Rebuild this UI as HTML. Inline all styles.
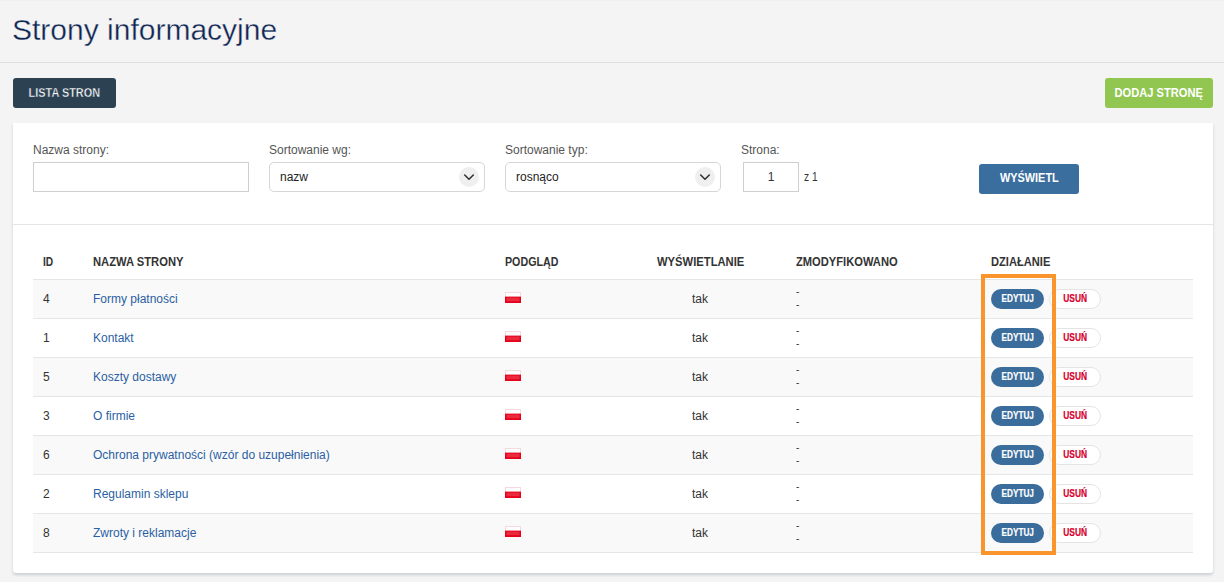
<!DOCTYPE html>
<html><head><meta charset="utf-8">
<style>
*{margin:0;padding:0;box-sizing:border-box}
html,body{-webkit-font-smoothing:antialiased;width:1224px;height:582px;overflow:hidden;background:#f4f4f4;font-family:"Liberation Sans",sans-serif;position:relative}
.a{position:absolute;white-space:nowrap}
.title{left:12px;top:12px;font-size:30px;line-height:36px;color:#0e2552;-webkit-text-stroke:0.35px #f4f4f4}
.hr{left:0;top:62px;width:1224px;height:1px;background:#dbdfe2}
.btn{border-radius:3px;color:#fff;font-size:12px;font-weight:bold;text-align:center;line-height:30px}
.card{left:13px;top:123px;width:1200px;height:450px;background:#fff;border-radius:0 0 3px 3px;box-shadow:0 2px 3px rgba(40,60,90,.2)}
.lbl{font-size:12px;color:#555;line-height:14px}
.inp{height:30px;border:1px solid #cfcfcf;background:#fff}
.sel{height:30px;border:1px solid #d6d6d6;border-radius:5px;background:#fff;font-size:12px;color:#222;line-height:28px;padding-left:10px}
.circ{position:absolute;left:189px;top:4px;width:20px;height:20px;border-radius:50%;background:#efefef}
.th{font-size:12px;font-weight:bold;color:#333;line-height:14px}
.row{left:33px;width:1160px;height:39px;border-top:1px solid #e3e7ea}
.row.s{background:#f9f9f9}
.td{font-size:12px;color:#333;line-height:14px}
.lnk{font-size:12px;color:#2b5fa3;line-height:14px}
.flag{width:16px;height:11px}
.dash{font-size:10px;color:#333;line-height:13.4px}
.ed{width:53px;height:20px;border-radius:10px;background:#3a6d9c;color:#fff;font-size:10px;font-weight:bold;text-align:center;line-height:20px;-webkit-text-stroke:0.2px #fff}
.us{width:52px;height:20px;border-radius:10px;background:#fff;border:1px solid #e4e4e4;color:#d7002d;font-size:10px;font-weight:bold;text-align:center;line-height:18px;-webkit-text-stroke:0.2px #d7002d}
.sx{display:inline-block;transform-origin:50% 50%}
.sl{display:inline-block;transform-origin:0 50%}
</style></head><body>
<div class="a title">Strony informacyjne</div>
<div class="a hr"></div>
<div class="a" style="left:0;top:0;width:1224px;height:1px;background:#edeff1"></div>
<div class="a btn" style="left:13px;top:78px;width:103px;height:30px;background:#2c4253"><span class="sx" style="transform:scaleX(.91);-webkit-text-stroke:0.4px #2c4253">LISTA STRON</span></div>
<div class="a btn" style="left:1105px;top:78px;width:108px;height:30px;background:#91c651"><span class="sx" style="transform:scaleX(.926)">DODAJ STRONĘ</span></div>
<div class="a card"></div>

<div class="a lbl" style="left:33px;top:143px">Nazwa strony:</div>
<div class="a inp" style="left:33px;top:162px;width:216px"></div>
<div class="a lbl" style="left:269px;top:143px">Sortowanie wg:</div>
<div class="a sel" style="left:269px;top:162px;width:216px">nazw<div class="circ"><svg width="20" height="20" viewBox="0 0 20 20" style="display:block"><path d="M5.7 8 L10 12.2 L14.3 8" fill="none" stroke="#333" stroke-width="1.6" stroke-linecap="round" stroke-linejoin="round"/></svg></div></div>
<div class="a lbl" style="left:505px;top:143px">Sortowanie typ:</div>
<div class="a sel" style="left:505px;top:162px;width:216px">rosnąco<div class="circ"><svg width="20" height="20" viewBox="0 0 20 20" style="display:block"><path d="M5.7 8 L10 12.2 L14.3 8" fill="none" stroke="#333" stroke-width="1.6" stroke-linecap="round" stroke-linejoin="round"/></svg></div></div>
<div class="a lbl" style="left:741px;top:143px">Strona:</div>
<div class="a inp" style="left:743px;top:162px;width:56px;font-size:12px;color:#333;text-align:center;line-height:28px">1</div>
<div class="a td" style="left:804px;top:170px"><span class="sl" style="transform:scaleX(.85)">z 1</span></div>
<div class="a btn" style="left:979px;top:164px;width:100px;height:30px;line-height:28px;background:#3a6e9f"><span class="sx" style="transform:scaleX(.91)">WYŚWIETL</span></div>

<div class="a" style="left:13px;top:224px;width:1200px;height:1px;background:#e3e6e9"></div>

<div class="a th" style="left:43px;top:255px"><span class="sl" style="transform:scaleX(0.85)">ID</span></div>
<div class="a th" style="left:93px;top:255px"><span class="sl" style="transform:scaleX(0.934)">NAZWA STRONY</span></div>
<div class="a th" style="left:505px;top:255px"><span class="sl" style="transform:scaleX(0.89)">PODGLĄD</span></div>
<div class="a th" style="left:601px;width:200px;text-align:center;top:255px"><span class="sx" style="transform:scaleX(.935)">WYŚWIETLANIE</span></div>
<div class="a th" style="left:796px;top:255px"><span class="sl" style="transform:scaleX(0.93)">ZMODYFIKOWANO</span></div>
<div class="a th" style="left:991px;top:255px"><span class="sl" style="transform:scaleX(0.927)">DZIAŁANIE</span></div>

<div class="a row s" style="top:279px"></div>
<div class="a td" style="left:43px;top:292px">4</div>
<div class="a lnk" style="left:93px;top:292px">Formy płatności</div>
<div class="a flag" style="left:505px;top:292px"><svg width="16" height="11" viewBox="0 0 16 11" style="display:block"><rect x="0.5" y="0.5" width="15" height="5" fill="#fff" stroke="#f6d9dd" stroke-width="1"/><rect x="0" y="4.6" width="16" height="6.4" fill="#e6001c"/><rect x="1.5" y="5.6" width="13" height="3.6" fill="#ec2a3e"/></svg></div>
<div class="a td" style="left:692px;top:292px">tak</div>
<div class="a dash" style="left:796px;top:285px">-<br>-</div>
<div class="a ed" style="left:991px;top:289px"><span class="sx" style="transform:scaleX(.82)">EDYTUJ</span></div>
<div class="a us" style="left:1049px;top:289px"><span class="sx" style="transform:scaleX(.84)">USUŃ</span></div>
<div class="a row" style="top:318px"></div>
<div class="a td" style="left:43px;top:331px">1</div>
<div class="a lnk" style="left:93px;top:331px">Kontakt</div>
<div class="a flag" style="left:505px;top:331px"><svg width="16" height="11" viewBox="0 0 16 11" style="display:block"><rect x="0.5" y="0.5" width="15" height="5" fill="#fff" stroke="#f6d9dd" stroke-width="1"/><rect x="0" y="4.6" width="16" height="6.4" fill="#e6001c"/><rect x="1.5" y="5.6" width="13" height="3.6" fill="#ec2a3e"/></svg></div>
<div class="a td" style="left:692px;top:331px">tak</div>
<div class="a dash" style="left:796px;top:324px">-<br>-</div>
<div class="a ed" style="left:991px;top:328px"><span class="sx" style="transform:scaleX(.82)">EDYTUJ</span></div>
<div class="a us" style="left:1049px;top:328px"><span class="sx" style="transform:scaleX(.84)">USUŃ</span></div>
<div class="a row s" style="top:357px"></div>
<div class="a td" style="left:43px;top:370px">5</div>
<div class="a lnk" style="left:93px;top:370px">Koszty dostawy</div>
<div class="a flag" style="left:505px;top:370px"><svg width="16" height="11" viewBox="0 0 16 11" style="display:block"><rect x="0.5" y="0.5" width="15" height="5" fill="#fff" stroke="#f6d9dd" stroke-width="1"/><rect x="0" y="4.6" width="16" height="6.4" fill="#e6001c"/><rect x="1.5" y="5.6" width="13" height="3.6" fill="#ec2a3e"/></svg></div>
<div class="a td" style="left:692px;top:370px">tak</div>
<div class="a dash" style="left:796px;top:363px">-<br>-</div>
<div class="a ed" style="left:991px;top:367px"><span class="sx" style="transform:scaleX(.82)">EDYTUJ</span></div>
<div class="a us" style="left:1049px;top:367px"><span class="sx" style="transform:scaleX(.84)">USUŃ</span></div>
<div class="a row" style="top:396px"></div>
<div class="a td" style="left:43px;top:409px">3</div>
<div class="a lnk" style="left:93px;top:409px">O firmie</div>
<div class="a flag" style="left:505px;top:409px"><svg width="16" height="11" viewBox="0 0 16 11" style="display:block"><rect x="0.5" y="0.5" width="15" height="5" fill="#fff" stroke="#f6d9dd" stroke-width="1"/><rect x="0" y="4.6" width="16" height="6.4" fill="#e6001c"/><rect x="1.5" y="5.6" width="13" height="3.6" fill="#ec2a3e"/></svg></div>
<div class="a td" style="left:692px;top:409px">tak</div>
<div class="a dash" style="left:796px;top:402px">-<br>-</div>
<div class="a ed" style="left:991px;top:406px"><span class="sx" style="transform:scaleX(.82)">EDYTUJ</span></div>
<div class="a us" style="left:1049px;top:406px"><span class="sx" style="transform:scaleX(.84)">USUŃ</span></div>
<div class="a row s" style="top:435px"></div>
<div class="a td" style="left:43px;top:448px">6</div>
<div class="a lnk" style="left:93px;top:448px">Ochrona prywatności (wzór do uzupełnienia)</div>
<div class="a flag" style="left:505px;top:448px"><svg width="16" height="11" viewBox="0 0 16 11" style="display:block"><rect x="0.5" y="0.5" width="15" height="5" fill="#fff" stroke="#f6d9dd" stroke-width="1"/><rect x="0" y="4.6" width="16" height="6.4" fill="#e6001c"/><rect x="1.5" y="5.6" width="13" height="3.6" fill="#ec2a3e"/></svg></div>
<div class="a td" style="left:692px;top:448px">tak</div>
<div class="a dash" style="left:796px;top:441px">-<br>-</div>
<div class="a ed" style="left:991px;top:445px"><span class="sx" style="transform:scaleX(.82)">EDYTUJ</span></div>
<div class="a us" style="left:1049px;top:445px"><span class="sx" style="transform:scaleX(.84)">USUŃ</span></div>
<div class="a row" style="top:474px"></div>
<div class="a td" style="left:43px;top:487px">2</div>
<div class="a lnk" style="left:93px;top:487px">Regulamin sklepu</div>
<div class="a flag" style="left:505px;top:487px"><svg width="16" height="11" viewBox="0 0 16 11" style="display:block"><rect x="0.5" y="0.5" width="15" height="5" fill="#fff" stroke="#f6d9dd" stroke-width="1"/><rect x="0" y="4.6" width="16" height="6.4" fill="#e6001c"/><rect x="1.5" y="5.6" width="13" height="3.6" fill="#ec2a3e"/></svg></div>
<div class="a td" style="left:692px;top:487px">tak</div>
<div class="a dash" style="left:796px;top:480px">-<br>-</div>
<div class="a ed" style="left:991px;top:484px"><span class="sx" style="transform:scaleX(.82)">EDYTUJ</span></div>
<div class="a us" style="left:1049px;top:484px"><span class="sx" style="transform:scaleX(.84)">USUŃ</span></div>
<div class="a row s" style="top:513px"></div>
<div class="a td" style="left:43px;top:526px">8</div>
<div class="a lnk" style="left:93px;top:526px">Zwroty i reklamacje</div>
<div class="a flag" style="left:505px;top:526px"><svg width="16" height="11" viewBox="0 0 16 11" style="display:block"><rect x="0.5" y="0.5" width="15" height="5" fill="#fff" stroke="#f6d9dd" stroke-width="1"/><rect x="0" y="4.6" width="16" height="6.4" fill="#e6001c"/><rect x="1.5" y="5.6" width="13" height="3.6" fill="#ec2a3e"/></svg></div>
<div class="a td" style="left:692px;top:526px">tak</div>
<div class="a dash" style="left:796px;top:519px">-<br>-</div>
<div class="a ed" style="left:991px;top:523px"><span class="sx" style="transform:scaleX(.82)">EDYTUJ</span></div>
<div class="a us" style="left:1049px;top:523px"><span class="sx" style="transform:scaleX(.84)">USUŃ</span></div>
<div class="a" style="left:33px;top:552px;width:1160px;height:1px;background:#e3e7ea"></div>
<div class="a" style="left:981px;top:274px;width:75px;height:281px;border:4px solid #fa952c"></div>
</body></html>
